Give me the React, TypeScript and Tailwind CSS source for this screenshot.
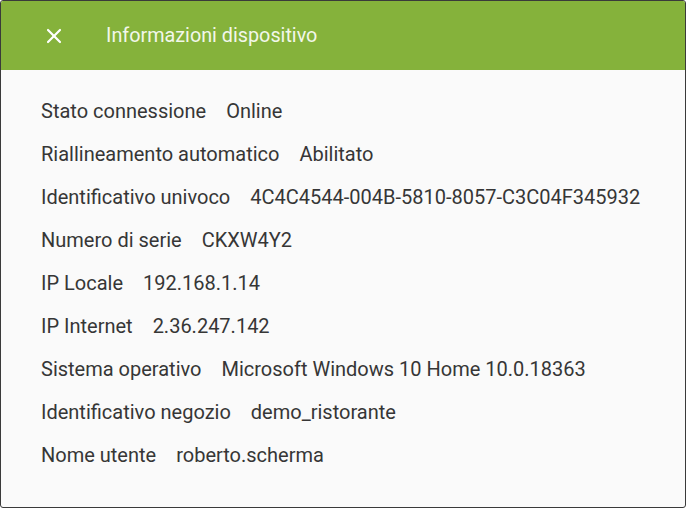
import { X } from "lucide-react";

const rows: [string, string][] = [
  ["Stato connessione", "Online"],
  ["Riallineamento automatico", "Abilitato"],
  ["Identificativo univoco", "4C4C4544-004B-5810-8057-C3C04F345932"],
  ["Numero di serie", "CKXW4Y2"],
  ["IP Locale", "192.168.1.14"],
  ["IP Internet", "2.36.247.142"],
  ["Sistema operativo", "Microsoft Windows 10 Home 10.0.18363"],
  ["Identificativo negozio", "demo_ristorante"],
  ["Nome utente", "roberto.scherma"],
];

export default function App() {
  return (
    <div
      className="w-[686px] h-[508px] flex flex-col overflow-hidden rounded-[3px] border border-[#3a3a3a] bg-[#fafafa]"
      style={{ fontFamily: "Roboto, 'Liberation Sans', sans-serif" }}
    >
      {/* Barra titolo */}
      <header className="h-[69px] shrink-0 bg-[#85b23b] flex items-center">
        <button className="ml-[41px] w-6 h-6 flex items-center justify-center text-white" aria-label="Chiudi">
          <X className="w-6 h-6" strokeWidth={2.2} />
        </button>
        <h1 className="ml-[40px] text-[19.8px] text-[#f2f7ea]">Informazioni dispositivo</h1>
      </header>

      {/* Elenco informazioni */}
      <div className="pt-[19px] px-[40px]">
        {rows.map(([label, value]) => (
          <div key={label} className="h-[43px] flex items-center gap-[20px] text-[20px] text-[#363636]">
            <span>{label}</span>
            <span>{value}</span>
          </div>
        ))}
      </div>
    </div>
  );
}
